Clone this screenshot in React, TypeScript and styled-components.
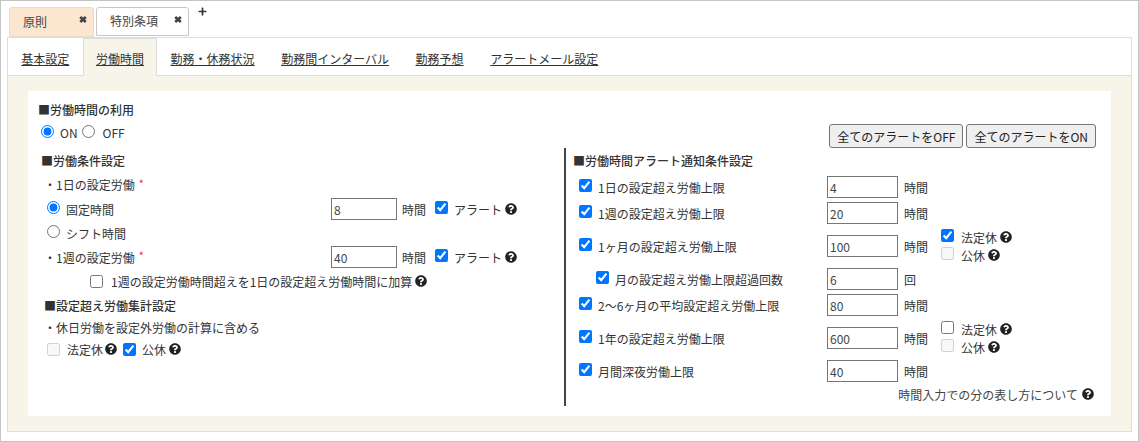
import React from "react";
import styled, { createGlobalStyle } from "styled-components";
import { FaPlus, FaQuestionCircle } from "react-icons/fa";

const Global = createGlobalStyle`
  html, body { margin: 0; padding: 0; background: #fff; }
  body { font-family: "Noto Sans CJK JP", sans-serif; font-size: 12px; color: #333; }
  input, button { font-family: inherit; font-size: 12px; }
`;

const Frame = styled.div`
  box-sizing: border-box; width: 1139px; height: 442px;
  border: 1px solid #c4c4c4; padding: 6px 6px 9px;
`;
const TabBar = styled.div`display: flex; height: 30px; padding-left: 2px; gap: 2px;`;
const Tab = styled.div<{ $active?: boolean; $w: number }>`
  box-sizing: border-box; width: ${p => p.$w}px; height: ${p => (p.$active ? 29 : 30)}px;
  display: flex; align-items: center; justify-content: space-between; padding: 0 6px 2px 13px;
  background: ${p => (p.$active ? "#fff" : "#fde6d0")};
  border: 1px solid ${p => (p.$active ? "#c8c8c8" : "#e6dccf")};
  border-radius: 3px 3px 0 0; color: #444;
`;
const CloseIcon = styled.svg`width: 8px; height: 7px; margin-top: -3px; flex: none;`;
const AddTab = styled.div`
  margin-left: 7px; height: 9px; color: #333; svg { display: block; font-size: 9px; }
`;
const Panel = styled.div`
  box-sizing: border-box; height: 395px; border: 1px solid #ddd; background: #f7f4ea; display: flex; flex-direction: column;
`;
const Nav = styled.nav`
  display: flex; height: 38px; background: #fff; border-bottom: 1px solid #ddd; flex: none; box-sizing: border-box;
`;
const NavItem = styled.a<{ $active?: boolean }>`
  display: flex; align-items: center; padding: 2px 13.3px 0; color: #333; text-decoration: underline;
  height: 38px; box-sizing: border-box;
  ${p => p.$active ? "background:#f7f4ea; box-shadow: inset 1px 0 #ddd, inset -1px 0 #ddd, inset 0 1px #ddd;" : ""}
`;
const Sheet = styled.div`
  margin: 15px 20px; background: #fff; height: 325px; flex: none;
`;
const Top = styled.div`
  height: 57px; box-sizing: border-box; padding: 9px 15px 0 10px;
  display: flex; justify-content: space-between; align-items: flex-end;
`;
const TopLeft = styled.div`display: flex; flex-direction: column; align-self: flex-start;`;
const Title = styled.div<{ $x?: number; $h?: number }>`
  height: ${p => p.$h ?? 24}px; display: flex; align-items: center; font-weight: 500; color: #333;
  padding-left: ${p => p.$x ?? 0}px;
`;
const OnOff = styled.div`
  height: 28px; display: flex; align-items: center; padding-left: 3px;
  input { margin: -1px 6px 0 0; }
  span { margin-right: 6px; margin-top: 1px; }
  span + input { margin-left: -2px; margin-right: 8px; }
`;
const Buttons = styled.div`display: flex; gap: 3px;`;
const Btn = styled.button`
  box-sizing: border-box; height: 24px; padding: 0 7px; border: 1px solid #767676; border-radius: 3px;
  background: #efefef; color: #222; cursor: pointer; white-space: nowrap;
`;
const Columns = styled.div`display: flex;`;
const Left = styled.div`width: 536px; flex: none;`;
const Right = styled.div`
  width: 547px; height: 258px; border-left: 2px solid #444; box-sizing: border-box; padding-left: 7px;
`;
const Line = styled.div<{ $h?: number; $x?: number }>`
  display: flex; align-items: center; height: ${p => p.$h ?? 24}px; padding-left: ${p => p.$x ?? 19}px;
  input[type=checkbox] { margin: 0; flex: none; }
  input[type=radio] { margin: -3px 0 0; flex: none; }
`;
const Req = styled.span`color: #e33; margin-left: 4px; font-size: 11px; margin-top: -4px;`;
const Lbl = styled.span<{ $gap?: number }>`margin-left: ${p => p.$gap ?? 6}px; white-space: nowrap;`;
const Help = styled(FaQuestionCircle)<{ $gap?: number }>`
  font-size: 12px; color: #222; margin-left: ${p => p.$gap ?? 3}px; flex: none;
`;
const Num = styled.input`
  box-sizing: border-box; height: 22px; border: 1px solid #767676; padding: 1px 2px; color: #444;
  border-radius: 0; outline: none; flex: none;
`;
const LeftNum = styled(Num)`width: 66px;`;
const Unit = styled.span`margin-left: 5px; white-space: nowrap;`;
const FieldSlot = styled.div<{ $w?: number }>`
  flex: none; width: ${p => p.$w ?? 284}px; display: flex; align-items: center;
`;
const Alert = styled.div`
  display: flex; align-items: center; margin-left: 9px;
  input[type=checkbox] { margin: -3px 0 0; }
`;
const LowBox = styled.input`margin: 0 0 0 6px !important;`;
const Row = styled.div<{ $tall?: boolean }>`
  display: grid; grid-template-columns: 248px 71px 6px auto 1fr; align-items: center;
  height: ${p => (p.$tall ? 40 : 26)}px; padding-left: 6px;
`;
const RowLabel = styled.label<{ $sub?: boolean }>`
  display: flex; align-items: center; padding-left: ${p => (p.$sub ? 17 : 0)}px;
  input { margin: -3px 0 0; flex: none; }
`;
const RowNum = styled(Num)`width: 71px; grid-column: 2;`;
const RowUnit = styled.span`grid-column: 4; white-space: nowrap;`;
const Extras = styled.div`grid-column: 5; display: flex; flex-direction: column; padding-left: 13px; gap: 5px;`;
const Extra = styled.label`
  display: flex; align-items: center; height: 13px; input { margin: -3px 0 0; flex: none; }
`;
const Note = styled.div`
  height: 20px; display: flex; align-items: center; justify-content: flex-end; padding-right: 17px; color: #444;
`;
const HeaderGap = styled.div`height: 2px;`;

const Close = () => (
  <CloseIcon viewBox="0 0 8 7" aria-hidden="true">
    <path d="M1.2 1 L6.8 6 M6.8 1 L1.2 6" stroke="#444" strokeWidth="2.7" fill="none" />
  </CloseIcon>
);

const alerts = [
  { label: "1日の設定超え労働上限", value: "4" },
  { label: "1週の設定超え労働上限", value: "20" },
  { label: "1ヶ月の設定超え労働上限", value: "100", tall: true, extras: [[true, false, "法定休"], [false, true, "公休"]] },
  { label: "月の設定超え労働上限超過回数", value: "6", sub: true, unit: "回" },
  { label: "2〜6ヶ月の平均設定超え労働上限", value: "80" },
  { label: "1年の設定超え労働上限", value: "600", tall: true, extras: [[false, false, "法定休"], [false, true, "公休"]] },
  { label: "月間深夜労働上限", value: "40", tall: false },
] as { label: string; value: string; tall?: boolean; sub?: boolean; unit?: string; extras?: [boolean, boolean, string][] }[];

const navItems = ["基本設定", "労働時間", "勤務・休務状況", "勤務間インターバル", "勤務予想", "アラートメール設定"];

export default function App() {
  return (
    <Frame>
      <Global />
      <TabBar>
        <Tab $w={85}>原則<Close /></Tab>
        <Tab $w={93} $active>特別条項<Close /></Tab>
        <AddTab><FaPlus /></AddTab>
      </TabBar>
      <Panel>
        <Nav>
          {navItems.map((n, i) => <NavItem key={n} $active={i === 1}>{n}</NavItem>)}
        </Nav>
        <Sheet>
          <Top>
            <TopLeft>
              <Title $h={18}>■労働時間の利用</Title>
              <OnOff>
                <input type="radio" name="use" defaultChecked /><span>ON</span>
                <input type="radio" name="use" /><span>OFF</span>
              </OnOff>
            </TopLeft>
            <Buttons>
              <Btn>全てのアラートをOFF</Btn>
              <Btn>全てのアラートをON</Btn>
            </Buttons>
          </Top>
          <Columns>
            <Left>
              <Title $x={13}>■労働条件設定</Title>
              <Line $h={25} $x={16}>・1日の設定労働<Req>*</Req></Line>
              <Line>
                <FieldSlot>
                  <input type="radio" name="mode" defaultChecked /><Lbl>固定時間</Lbl>
                </FieldSlot>
                <LeftNum defaultValue="8" />
                <Unit>時間</Unit>
                <Alert><input type="checkbox" defaultChecked /><Lbl>アラート</Lbl><Help /></Alert>
              </Line>
              <Line>
                <input type="radio" name="mode" /><Lbl>シフト時間</Lbl>
              </Line>
              <Line $x={16}>
                <FieldSlot $w={287}>・1週の設定労働<Req>*</Req></FieldSlot>
                <LeftNum defaultValue="40" />
                <Unit>時間</Unit>
                <Alert><input type="checkbox" defaultChecked /><Lbl>アラート</Lbl><Help /></Alert>
              </Line>
              <Line $x={62}>
                <input type="checkbox" /><Lbl $gap={8}>1週の設定労働時間超えを1日の設定超え労働時間に加算</Lbl><Help />
              </Line>
              <Title $x={16}>■設定超え労働集計設定</Title>
              <Line $h={20} $x={16}>・休日労働を設定外労働の計算に含める</Line>
              <Line>
                <input type="checkbox" disabled /><Lbl $gap={7}>法定休</Lbl><Help $gap={2} />
                <LowBox type="checkbox" defaultChecked />
                <Lbl $gap={6}>公休</Lbl><Help />
              </Line>
            </Left>
            <Right>
              <Title>■労働時間アラート通知条件設定</Title>
              <HeaderGap />
              {alerts.map(a => (
                <Row key={a.label} $tall={a.tall}>
                  <RowLabel $sub={a.sub}><input type="checkbox" defaultChecked /><Lbl>{a.label}</Lbl></RowLabel>
                  <RowNum defaultValue={a.value} />
                  <RowUnit>{a.unit ?? "時間"}</RowUnit>
                  {a.extras && (
                    <Extras>
                      {a.extras.map(([c, d, t]) => (
                        <Extra key={t}>
                          <input type="checkbox" defaultChecked={c} disabled={d} /><Lbl $gap={7}>{t}</Lbl><Help />
                        </Extra>
                      ))}
                    </Extras>
                  )}
                </Row>
              ))}
              <Note>時間入力での分の表し方について<Help $gap={4} /></Note>
            </Right>
          </Columns>
        </Sheet>
      </Panel>
    </Frame>
  );
}
